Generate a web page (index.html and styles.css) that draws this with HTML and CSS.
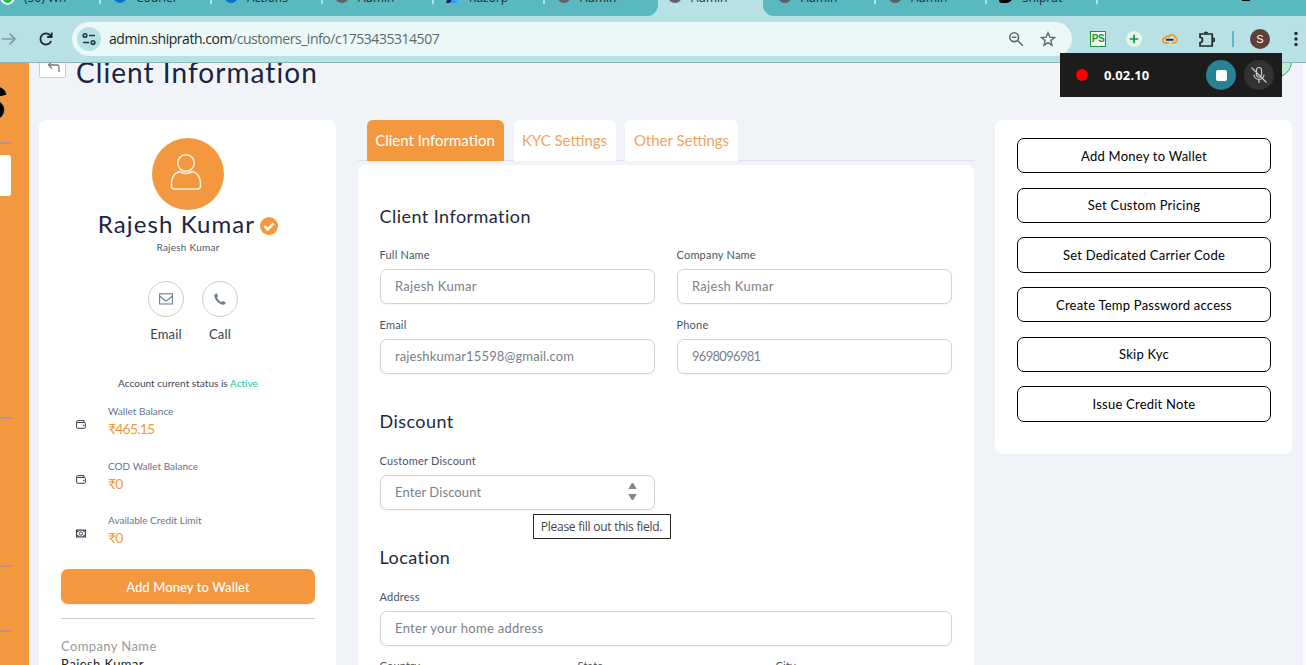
FILE: index.html
```html
<!DOCTYPE html>
<html lang="en">
<head>
  <meta charset="UTF-8">
  <meta name="viewport" content="width=device-width, initial-scale=1.0">
  <title>Admin - Client Information</title>
  <link rel="stylesheet" href="styles.css">
</head>
<body>
  <!-- browser bar -->
  <header class="browser">
    <div class="tab-strip">
      <div class="tab-group left">
        <div class="tab"><span class="fav whatsapp"></span><span>(50) Wh</span></div>
        <div class="tab"><span class="fav ring-blue"></span><span>Courier</span></div>
        <div class="tab"><span class="fav ring-blue"></span><span>Actions</span></div>
        <div class="tab"><span class="fav ring"></span><span>Admin</span></div>
        <div class="tab"><span class="fav razor"></span><span>Razorp</span></div>
        <div class="tab last"><span class="fav ring"></span><span>Admin</span></div>
      </div>
      <div class="tab active"><span class="fav ring"></span><span>Admin</span></div>
      <div class="tab-group right">
        <div class="tab first"><span class="fav ring"></span><span>Admin</span></div>
        <div class="tab"><span class="fav ring"></span><span>Admin</span></div>
        <div class="tab"><span class="fav ship"></span><span>Shiprat</span></div>
        <span class="new-tab">+</span>
        <span class="win-max"></span>
        <span class="win-close">✕</span>
      </div>
    </div>
    <div class="toolbar">
      <svg class="nav-forward" width="16" height="16" viewBox="0 0 16 16" fill="none" stroke="#7f9da0" stroke-width="1.6"><path d="M1 8h13M8.500 2.500 14 8l-5.500 5.500"/></svg>
      <svg class="nav-reload" width="16" height="16" viewBox="0 0 16 16" fill="none" stroke="#1f2a2b" stroke-width="1.8"><path d="M13.200 10A5.600 5.600 0 1 1 12.300 4.300L13.500 5.500"/><path d="M13.700 1.500v4.500H9.200"/></svg>
      <div class="omnibox">
        <span class="site-info">
          <svg width="14" height="14" viewBox="0 0 14 14" fill="none" stroke="#27383a" stroke-width="1.6"><circle cx="3" cy="3.500" r="1.800"/><path d="M7 3.500h6M1 10.500h6"/><circle cx="11" cy="10.500" r="1.800"/></svg>
        </span>
        <span class="url"><b>admin.shiprath.com</b>/customers_info/c1753435314507</span>
        <svg class="zoom-icon" width="16" height="16" viewBox="0 0 16 16" fill="none" stroke="#5c6b6d" stroke-width="1.6"><circle cx="6.200" cy="6.200" r="4.400"/><path d="M9.500 9.500 14.800 14.800M4 6.200h4.400"/></svg>
        <svg class="star-icon" width="16" height="16" viewBox="0 0 16 16" fill="none" stroke="#5c6b6d" stroke-width="1.4"><path d="M8 1.800l1.800 4.300 4.700.4-3.600 3.100 1.100 4.600L8 11.700l-4 2.500 1.100-4.600L1.500 6.500l4.700-.4z"/></svg>
      </div>
      <div class="extensions">
        <span class="ext-ps">PS</span>
        <svg class="ext-plus" width="16" height="16" viewBox="0 0 16 16"><circle cx="8" cy="8" r="8" fill="#e4f5e3"/><path d="M8 3.800v8.400M3.800 8h8.400" stroke="#0e9150" stroke-width="1.7"/></svg>
        <svg class="ext-cloud" width="16" height="12" viewBox="0 0 16 12" fill="none"><path d="M7 9.800H3.300A2.300 2.300 0 0 1 3 5C3.500 3.300 5.500 3 6.600 4 7.700 1 12.500 1.200 12.800 4c2.700.6 2.600 5.600-.6 5.800H10" stroke="#f59a23" stroke-width="1.8"/><path d="M4 6.800h7.500" stroke="#223" stroke-width="1.8"/></svg>
        <svg class="ext-puzzle" width="17" height="17" viewBox="0 0 17 17" fill="none" stroke="#202b2c" stroke-width="1.7"><path d="M2 3h12.200v12H2v-3.200c3.300-.3 3.300-5.200 0-5.600z"/><path d="M6.500 2.300a1.600 1.600 0 0 1 3 0M15 7.400a1.500 1.500 0 0 1 0 3"/></svg>
        <span class="ext-line"></span>
        <span class="profile">S</span>
        <svg class="menu-dots" width="4" height="16" viewBox="0 0 4 16" fill="#202b2c"><circle cx="2" cy="2.500" r="1.700"/><circle cx="2" cy="8" r="1.700"/><circle cx="2" cy="13.500" r="1.700"/></svg>
      </div>
    </div>
  </header>

  <div class="page">
    <aside class="sidebar">
      <span class="logo-text">S</span>
      <span class="side-active"></span>
      <i class="side-line l1"></i>
      <i class="side-line l2"></i>
      <i class="side-line l3"></i>
      <i class="side-line l4"></i>
    </aside>

    <main class="content">
      <div class="title-row">
        <button class="back-btn" aria-label="Back">
          <svg width="14" height="14" viewBox="0 0 14 14" fill="none" stroke="#777" stroke-width="1.3"><path d="M5 -.5 1.500 3 5 6.500M1.500 3h8.500a2 2 0 0 1 2 2v5"/></svg>
        </button>
        <h1>Client Information</h1>
      </div>

      <div class="columns">
        <section class="card profile-card">
          <div class="avatar">
            <svg width="32" height="38" viewBox="0 0 32 38" fill="none" stroke="#fff" stroke-opacity=".85" stroke-width="1.5"><circle cx="16" cy="10" r="8.300"/><path d="M9.500 18.500C4 20 1.500 24 1.500 31v2q0 3 3 3h23q3 0 3-3v-2c0-7-2.500-11-8-12.500-4 2.500-9 2.500-13 0z"/></svg>
          </div>
          <div class="name-row">
            <span class="name">Rajesh Kumar</span>
            <svg width="18" height="18" viewBox="0 0 18 18"><circle cx="9" cy="9" r="9" fill="#f4983f"/><path d="M4.500 9l3.200 3.300 6-6" fill="none" stroke="#fff" stroke-width="2.6"/></svg>
          </div>
          <p class="sub-name">Rajesh Kumar</p>
          <div class="contacts">
            <div class="contact">
              <span class="circle"><svg width="14" height="12" viewBox="0 0 14 12" fill="none" stroke="#6d7f95" stroke-width="1.1"><rect x=".6" y=".8" width="12.800" height="10.200"/><path d="M.8 3.200C3 5 4.500 6.200 5.800 7.200q1.200.8 2.400 0C9.500 6.200 11 5 13.200 3.200"/></svg></span>
              <span>Email</span>
            </div>
            <div class="contact">
              <span class="circle"><svg width="12" height="12" viewBox="0 0 12 12" fill="#6d7f95"><path d="M.4 2.200C.6 1 1.700.5 2.600.4c.5.200 1.300 2 1.400 2.700C4 3.700 2.900 4 3 4.600 3.600 6.300 5.500 8.300 7.400 9c.6.100 1-1 1.600-1 .7.100 2.400 1.100 2.600 1.500.1 1-.9 2-2 2.200C5.500 12 0 6.500.4 2.200z"/></svg></span>
              <span>Call</span>
            </div>
          </div>
          <p class="status">Account current status is <em>Active</em></p>

          <div class="balances">
            <div class="balance">
              <svg width="10" height="9" viewBox="0 0 10 9" fill="none" stroke="#39404f"><path d="M.6 1.500v5.800q0 1 1 1h6.800q1 0 1-1V3.400q0-.9-1-.9H1.200M.6 1.600Q.6.600 1.600.600H8v1.900"/><path d="M7 5.400h1.400"/></svg>
              <div><span class="label">Wallet Balance</span><span class="amount">₹465.15</span></div>
            </div>
            <div class="balance">
              <svg width="10" height="9" viewBox="0 0 10 9" fill="none" stroke="#39404f"><path d="M.6 1.500v5.800q0 1 1 1h6.800q1 0 1-1V3.400q0-.9-1-.9H1.200M.6 1.600Q.6.600 1.600.600H8v1.900"/><path d="M7 5.400h1.400"/></svg>
              <div><span class="label">COD Wallet Balance</span><span class="amount">₹0</span></div>
            </div>
            <div class="balance">
              <svg width="10" height="9" viewBox="0 0 10 9" fill="none" stroke="#39404f"><rect x=".6" y="1.100" width="8.800" height="6.800" stroke-width="1.2"/><circle cx="5" cy="4.500" r="1.700"/><path d="M1 2.500h1.500V1M7.500 1v1.500H9M1 6.500h1.500V8M7.500 8V6.500H9" stroke-width=".7"/></svg>
              <div><span class="label">Available Credit Limit</span><span class="amount">₹0</span></div>
            </div>
          </div>

          <button class="btn-primary">Add Money to Wallet</button>
          <hr>
          <p class="info-label">Company Name</p>
          <p class="info-value">Rajesh Kumar</p>
        </section>

        <section class="middle">
          <nav class="form-tabs">
            <a class="form-tab selected">Client Information</a>
            <a class="form-tab kyc">KYC Settings</a>
            <a class="form-tab other">Other Settings</a>
          </nav>
          <form class="card form-card">
            <h2>Client Information</h2>
            <div class="row">
              <label class="field"><span>Full Name</span><input type="text" placeholder="Rajesh Kumar"></label>
              <label class="field"><span>Company Name</span><input type="text" placeholder="Rajesh Kumar"></label>
            </div>
            <div class="row">
              <label class="field"><span>Email</span><input class="in-email" type="text" placeholder="rajeshkumar15598@gmail.com"></label>
              <label class="field"><span>Phone</span><input class="in-phone" type="text" placeholder="9698096981"></label>
            </div>
            <h2>Discount</h2>
            <div class="row">
              <label class="field discount">
                <span>Customer Discount</span><input type="text" placeholder="Enter Discount">
                <svg class="spinner" width="13" height="19" viewBox="0 0 13 19" fill="#858585"><path d="M6.500 1q.6 0 1 .6L10.700 7H2.300L5.500 1.600Q5.900 1 6.500 1zM6.500 18q.6 0 1-.6L10.700 12H2.300l3.200 5.400q.4.6 1 .6z"/></svg>
                <span class="tooltip">Please fill out this field.</span>
              </label>
            </div>
            <h2>Location</h2>
            <div class="row one">
              <label class="field"><span>Address</span><input type="text" placeholder="Enter your home address"></label>
            </div>
            <div class="row three">
              <label class="field"><span>Country</span></label>
              <label class="field"><span>State</span></label>
              <label class="field"><span>City</span></label>
            </div>
          </form>
        </section>

        <section class="card actions">
          <button>Add Money to Wallet</button>
          <button>Set Custom Pricing</button>
          <button>Set Dedicated Carrier Code</button>
          <button>Create Temp Password access</button>
          <button>Skip Kyc</button>
          <button>Issue Credit Note</button>
        </section>
      </div>
    </main>
    <span class="float-badge"></span>
    <span class="scrollbar"></span>
  </div>

  <!-- screen recorder -->
  <div class="recorder">
    <span class="rec-dot"></span>
    <span class="rec-time">0.02.10</span>
    <span class="rec-stop"><i></i></span>
    <span class="rec-mic">
      <svg width="18" height="18" viewBox="0 0 18 18" fill="none" stroke="#c9c9c9" stroke-width="1.2"><rect x="6.500" y="1.500" width="5" height="9.500" rx="2.500"/><path d="M4 8.500c0 6.500 10 6.500 10 0M9 13.500V17M1.500 1.500l15 15"/></svg>
    </span>
  </div>
</body>
</html>
```

FILE: styles.css
```css
* { box-sizing: border-box; }
html, body { height: 100%; overflow: hidden; }
body {
  margin: 0;
  font-family: Lato, "Noto Sans", sans-serif;
  background: #f0f3f8;
  color: #1e293b;
}
h1, h2, p { margin: 0; font-weight: 400; }
button { font-family: inherit; padding: 0; }
svg { display: block; flex: none; }

/* browser */
.browser {
  height: 63px;
  background: #b7e1e4;
  border-bottom: 1px solid #8cb4b8;
  overflow: hidden;
}
.tab-strip {
  display: flex;
  height: 40px;
  margin-top: -24px;
  font: 12px "Open Sans", sans-serif;
  color: #1d2b2c;
}
.tab-group { display: flex; background: #5ab8c1; }
.tab-group.left { width: 658px; border-bottom-right-radius: 11px; }
.tab-group.right { flex: 1; border-bottom-left-radius: 11px; }
.tab {
  display: flex;
  align-items: center;
  gap: 9px;
  width: 111px;
  flex: none;
  padding: 0 10px 0 12px;
  background: linear-gradient(#b7e1e4, #b7e1e4) right 12px / 2px 16px no-repeat;
}
.tab-group.left .tab:first-child { width: 101px; padding-left: 0; gap: 9px; }
.tab.last, .tab.active { background: none; }
.tab.active { width: 105px; padding-left: 10px; }
.tab.first { width: 113px; padding-left: 15px; }
.tab-group.left .tab.last { width: 110px; }
.tab span:last-child { padding-top: 2px; white-space: nowrap; }
.fav { width: 14px; height: 14px; border-radius: 50%; flex: none; }
.ring { border: 3px solid #5f6368; }
.ring-blue { border: 3px solid #0b76c9; }
.whatsapp { background: #1fc04f; border: 2px solid #fff; height: 17px; width: 15px; }
.razor { background: linear-gradient(100deg, #072654 50%, #3395ff 50%); border-radius: 0; width: 10px; margin: 0 2px; transform: skewX(-15deg); }
.ship { background: #000; border-radius: 3px 3px 7px 3px; }
.new-tab { margin: 11px 0 0 13px; font-size: 17px; line-height: 17px; }
.win-max { width: 8px; height: 9px; margin: 16px 42px 0 auto; border: 1.5px solid #000; }
.win-close { margin: 12px 5px 0 0; font-size: 11px; }

.toolbar { display: flex; align-items: center; height: 46px; }
.nav-forward { margin-left: 1px; }
.nav-reload { margin-left: 21px; }
.omnibox {
  display: flex;
  align-items: center;
  width: 1000px;
  height: 34px;
  margin-left: 18px;
  padding: 0 16px 0 5px;
  border-radius: 17px;
  background: #ebf8f8;
}
.site-info {
  display: flex;
  align-items: center;
  justify-content: center;
  width: 24px;
  height: 24px;
  border-radius: 50%;
  background: #b7e1e4;
}
.url { margin: 0 auto 0 8px; padding-bottom: 1px; font: 14px "Open Sans", sans-serif; letter-spacing: -.46px; color: #5d6a6b; }
.url b { font-weight: 400; color: #1b2627; }
.star-icon { margin-left: 16px; }
.extensions { display: flex; align-items: center; flex: 1; padding-left: 18px; }
.ext-ps {
  width: 16px;
  height: 16px;
  border: 1.5px solid #16963f;
  background: #f4fbf4;
  color: #16963f;
  font: bold 10px/14px "Liberation Sans", sans-serif;
  text-align: center;
  letter-spacing: -.5px;
}
.ext-plus, .ext-cloud, .ext-puzzle { margin-left: 20px; }
.ext-line { width: 2px; height: 16px; margin-left: 17px; background: #5ab8c1; }
.profile {
  width: 20px;
  height: 20px;
  margin-left: 16px;
  border-radius: 50%;
  background: #5d4037;
  color: #fff;
  font: 11px/20px "Liberation Sans", sans-serif;
  text-align: center;
}
.menu-dots { margin-left: 24px; }

/* page */
.page { position: relative; display: flex; height: 602px; overflow: hidden; }
.sidebar { position: relative; width: 29px; flex: none; background: #f4983f; overflow: hidden; }
.logo-text {
  position: absolute;
  top: 17px;
  right: 23px;
  color: #000;
  font: italic bold 48px/48px "Liberation Sans", sans-serif;
  -webkit-text-stroke: 1px #000;
}
.side-active {
  position: absolute;
  top: 92px;
  left: 0;
  width: 11px;
  height: 41px;
  border-radius: 0 3px 3px 0;
  background: #fff;
}
.side-line { position: absolute; left: 0; width: 11px; height: 2px; background: #bb9090; }
.l1 { top: 79px; }
.l2 { top: 354px; }
.l3 { top: 502px; }
.l4 { top: 567px; }

.content { flex: 1; padding: 0 14px 0 10px; }
.title-row { display: flex; height: 57px; }
.back-btn {
  width: 27px;
  height: 27px;
  margin-top: -12px;
  padding: 9px 0 0 7px;
  border: 1px solid #ccc;
  border-radius: 2px;
  background: #fff;
}
h1 { margin: -10px 0 0 10px; font-size: 28px; line-height: 38px; letter-spacing: 1.05px; color: #1b2440; }

.columns { display: grid; grid-template-columns: 297px 616px 297px; column-gap: 21.5px; align-items: start; }
.card { background: #fff; border-radius: 7px; }

.profile-card { height: 600px; padding: 18px 21px 0 22px; text-align: center; }
.avatar {
  display: flex;
  align-items: center;
  justify-content: center;
  width: 72px;
  height: 72px;
  margin: 0 auto;
  padding: 0 4px 4px 0;
  border-radius: 50%;
  background: #f4983f;
}
.name-row { display: flex; align-items: center; justify-content: center; gap: 5px; height: 31px; }
.name { margin-top: -4px; font-size: 24px; letter-spacing: 1.1px; color: #1b2440; }
.sub-name { margin-top: -1px; font-size: 10px; line-height: 14px; letter-spacing: .25px; color: #4c566a; }
.contacts { display: flex; justify-content: center; gap: 18px; margin: 27px 0 0 10px; }
.contact { width: 36px; font-size: 13px; line-height: 16px; letter-spacing: .2px; color: #334155; display: flex; flex-direction: column; align-items: center; }
.circle {
  display: flex;
  align-items: center;
  justify-content: center;
  width: 36px;
  height: 36px;
  margin-bottom: 9px;
  border: 1px solid #ccc;
  border-radius: 50%;
}
.status { margin-top: 34px; font-size: 10px; line-height: 14px; letter-spacing: .03px; color: #3d4659; }
.status em { font-style: normal; color: #1dbf8c; }
.balances { margin-top: 14px; padding: 0 0 1px 15px; text-align: left; }
.balance { display: flex; gap: 22px; height: 54.700px; }
.balance svg { margin-top: 16px; }
.balance div { display: flex; flex-direction: column; }
.label { font-size: 10px; line-height: 14px; letter-spacing: .02px; color: #64748b; }
.amount { font-size: 14px; line-height: 22px; letter-spacing: -.8px; color: #f4983f; }
.btn-primary {
  display: block;
  width: 254px;
  height: 35px;
  border: 0;
  border-radius: 7px;
  background: #f4983f;
  color: #fff;
  font-size: 13px;
  font-weight: 500;
  letter-spacing: .1px;
  box-shadow: 0 1px 2px rgba(0,0,0,.08);
}
.profile-card hr { margin: 14px 0 0; border: 0; border-top: 1px solid #ccc; }
.info-label { margin-top: 18px; font-size: 13px; line-height: 18px; text-align: left; letter-spacing: .4px; color: #999; }
.info-value { font-size: 13px; line-height: 18px; text-align: left; letter-spacing: .4px; color: #222; }

.form-tabs { display: flex; gap: 10px; height: 41px; padding-left: 9px; background: linear-gradient(#dde1ea, #dde1ea) 0 40px / 100% 1px no-repeat; }
.form-tab {
  width: 137px;
  border-radius: 6px 6px 0 0;
  background: #fff;
  color: #f2a35e;
  font-size: 15px;
  line-height: 40px;
  text-align: center;
  white-space: nowrap;
}
.form-tab.selected { background: #f4983f; color: #fff; }
.form-tab.kyc { width: 102px; }
.form-tab.other { width: 113px; margin-left: -1px; padding-left: 1px; }
.form-card { height: 560px; margin-top: 4px; padding: 39px 22px 0; }
h2 { height: 26px; margin-bottom: 18px; font-size: 18px; line-height: 24px; letter-spacing: .45px; color: #1e293b; }
.row { display: grid; grid-template-columns: 1fr 1fr; column-gap: 22px; margin-bottom: 13.600px; }
.row + h2 { margin: 34.500px 0 19px; }
.row.one { grid-template-columns: 1fr; margin-bottom: 13px; }
.row.three { grid-template-columns: 1fr 1fr 1fr; }
.field { display: block; position: relative; font-size: 11px; letter-spacing: .2px; color: #475569; }
.field > span:first-child { display: block; height: 21px; line-height: 14px; }
.field input {
  display: block;
  width: 100%;
  height: 35.400px;
  padding: 0 14px 1px 14.500px;
  border: 1px solid #cfd2da;
  border-radius: 7px;
  background: #fff;
  font: 13px Lato, sans-serif;
  letter-spacing: .3px;
  box-shadow: 0 1px 2px rgba(0,0,0,.05);
}
.field input::placeholder { color: #7b8088; opacity: 1; }
.field .in-email { letter-spacing: .13px; }
.field .in-phone { letter-spacing: -.7px; }
.discount input { letter-spacing: .1px; }
.spinner { position: absolute; top: 28px; right: 15.500px; }
.tooltip {
  position: absolute;
  top: 60px;
  left: 153px;
  width: 138px;
  height: 25px;
  border: 1px solid #2b2b2b;
  background: #fff;
  color: #444;
  font: 12px/23px "Open Sans", sans-serif;
  letter-spacing: -.25px;
  text-align: center;
  white-space: nowrap;
}

.actions { display: flex; flex-direction: column; gap: 14.300px; height: 334px; padding: 18px 21px 0 22px; }
.actions button {
  height: 35.350px;
  flex: none;
  border: 1px solid #000;
  border-radius: 7px;
  background: #fff;
  color: #000;
  font-size: 13px;
  letter-spacing: .23px;
}

.float-badge {
  position: absolute;
  top: -19px;
  right: 14px;
  width: 34px;
  height: 34px;
  border: 1px solid #38a169;
  border-radius: 50%;
  background: #c3ebd3;
}
.scrollbar { position: absolute; top: 0; right: 0; width: 3px; height: 100%; background: #fafafa; }

.recorder {
  position: absolute;
  top: 53px;
  left: 1060px;
  display: flex;
  align-items: center;
  width: 222px;
  height: 44px;
  padding: 0 8px 0 16px;
  background: #1c1c1c;
}
.rec-dot { width: 12px; height: 12px; border-radius: 50%; background: #f00; }
.rec-time { margin: 0 auto 0 16px; color: #fff; font: bold 13px "Open Sans", sans-serif; letter-spacing: .1px; }
.rec-stop, .rec-mic { display: flex; align-items: center; justify-content: center; width: 30px; height: 30px; border-radius: 50%; }
.rec-stop { background: #278293; }
.rec-stop i { width: 11px; height: 11px; border-radius: 2px; background: #fff; }
.rec-mic { margin-left: 8px; background: #333; }
```
